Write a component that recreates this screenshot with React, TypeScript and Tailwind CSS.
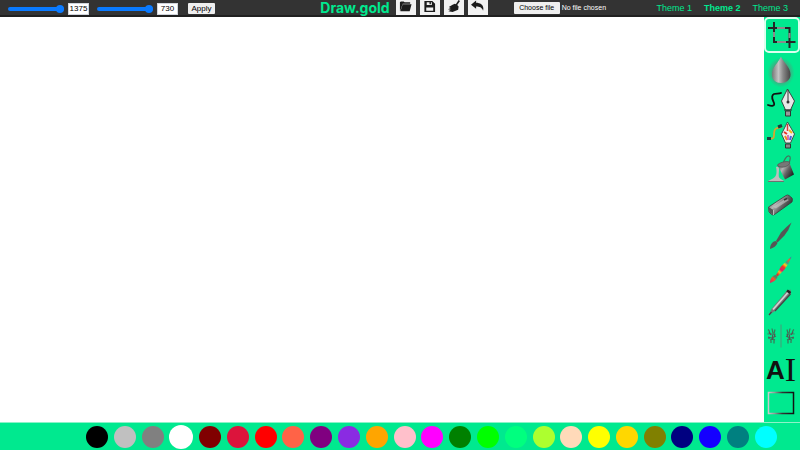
import { useState, type ReactNode } from "react";

const palette: { name: string; className: string }[] = [
  { name: "Black", className: "bg-[#000000]" },
  { name: "Silver", className: "bg-[#c0c0c0]" },
  { name: "Gray", className: "bg-[#808080]" },
  { name: "White", className: "bg-[#ffffff]" },
  { name: "Maroon", className: "bg-[#800000]" },
  { name: "Crimson", className: "bg-[#dc143c]" },
  { name: "Red", className: "bg-[#ff0000]" },
  { name: "Tomato", className: "bg-[#ff6347]" },
  { name: "Purple", className: "bg-[#800080]" },
  { name: "Blue violet", className: "bg-[#8a2be2]" },
  { name: "Orange", className: "bg-[#ffa500]" },
  { name: "Pink", className: "bg-[#ffc0cb]" },
  { name: "Fuchsia", className: "bg-[#ff00ff]" },
  { name: "Green", className: "bg-[#008000]" },
  { name: "Lime", className: "bg-[#00ff00]" },
  { name: "Spring green", className: "bg-[#00ff7f]" },
  { name: "Green yellow", className: "bg-[#adff2f]" },
  { name: "Peach", className: "bg-[#ffdab9]" },
  { name: "Yellow", className: "bg-[#ffff00]" },
  { name: "Gold", className: "bg-[#ffd700]" },
  { name: "Olive", className: "bg-[#808000]" },
  { name: "Navy", className: "bg-[#000080]" },
  { name: "Blue", className: "bg-[#1400ff]" },
  { name: "Teal", className: "bg-[#008080]" },
  { name: "Cyan", className: "bg-[#00ffff]" },
];

function Art({ children }: { children: ReactNode }) {
  return (
    <svg viewBox="0 0 36 34" className="h-[34px] w-9 shrink-0" fill="none" aria-hidden="true">
      {children}
    </svg>
  );
}

function Gradients() {
  return (
    <svg className="sr-only" aria-hidden="true">
      <defs>
        <linearGradient id="steel" x1="0" y1="0" x2="1" y2="0.6">
          <stop offset="0" stopColor="#333" />
          <stop offset="0.4" stopColor="#b5b5b5" />
          <stop offset="0.65" stopColor="#666" />
          <stop offset="1" stopColor="#222" />
        </linearGradient>
        <linearGradient id="metal" x1="0" y1="0" x2="1" y2="0">
          <stop offset="0" stopColor="#777" />
          <stop offset="0.35" stopColor="#c4c4c4" />
          <stop offset="0.6" stopColor="#888" />
          <stop offset="1" stopColor="#444" />
        </linearGradient>
        <linearGradient id="frame" gradientUnits="userSpaceOnUse" x1="4" y1="0" x2="30" y2="0">
          <stop offset="0" stopColor="#d0d0d0" />
          <stop offset="0.25" stopColor="#999" />
          <stop offset="0.55" stopColor="#333" />
          <stop offset="1" stopColor="#111" />
        </linearGradient>
        <linearGradient id="paint" gradientUnits="userSpaceOnUse" x1="6" y1="29" x2="27" y2="4">
          <stop offset="0" stopColor="#e01f6b" />
          <stop offset="0.15" stopColor="#ef5a24" />
          <stop offset="0.22" stopColor="#3c8f6a" />
          <stop offset="0.32" stopColor="#e6262d" />
          <stop offset="0.42" stopColor="#f2c21a" />
          <stop offset="0.5" stopColor="#d81f6d" />
          <stop offset="0.62" stopColor="#ef3a24" />
          <stop offset="0.7" stopColor="#f6d01f" />
          <stop offset="0.78" stopColor="#36a58c" />
          <stop offset="0.9" stopColor="#e8662a" />
          <stop offset="1" stopColor="#3557c8" />
        </linearGradient>
        <radialGradient id="halo">
          <stop offset="0.4" stopColor="#777" stopOpacity="0.9" />
          <stop offset="1" stopColor="#777" stopOpacity="0" />
        </radialGradient>
      </defs>
    </svg>
  );
}

function CropArt() {
  return (
    <Art>
      <g strokeWidth="2">
        <path d="M10 4v20M4 10h22M25.500 9v21M9 24h22.500" stroke="#262626" />
        <path d="M13 10h8M10 14v5M25.500 15v5M13 24h9" stroke="#8b8b8b" />
      </g>
    </Art>
  );
}

function DropArt() {
  return (
    <Art>
      <ellipse cx="17" cy="19.500" rx="13.500" ry="15" fill="url(#halo)" />
      <path d="M17 3.500C15 9 8 14 8 21.500C8 27 12 30 17 30S26.500 27 26.500 21.500C26.500 14 19 9 17 3.500Z" fill="url(#metal)" />
    </Art>
  );
}

function PenArt() {
  return (
    <Art>
      <path d="M4 19c4 1.500 7 1 6-2s-4-7 0-9c2-.8 5 0 7-1" stroke="#111" strokeWidth="1.800" strokeLinecap="round" />
      <path d="M23.500 3L17.500 15l4 9h5l4-9z" fill="#e8e8e8" stroke="#333" strokeWidth="0.900" />
      <path d="M24 4v12" stroke="#333" />
      <circle cx="24" cy="16" r="1.500" fill="#333" />
      <path d="M20 24h8M21.500 25h5v5h-5z" stroke="#333" fill="#999" />
    </Art>
  );
}

function ColorPenArt() {
  return (
    <Art>
      <path d="M4 19.500c4 .5 6 .5 6-3s0-6 2-7 4-.5 6-2" stroke="#d9a52e" strokeWidth="1.800" />
      <path d="M3 19.500h4M14 8l4-1.500" stroke="#1d3d3d" strokeWidth="3" />
      <path d="M23.500 3L17.500 15l4 9h5l4-9z" fill="#eee" stroke="#385347" />
      <path d="M23.500 5v7" stroke="#d93a3a" strokeWidth="1.500" />
      <path d="M20 13l3 2" stroke="#e6332a" strokeWidth="2" />
      <path d="M25 11l3 3" stroke="#f4b41a" strokeWidth="2" />
      <path d="M21 17l2 4" stroke="#f08a1c" strokeWidth="2" />
      <path d="M27 17l-1 4" stroke="#4b62d8" strokeWidth="2" />
      <path d="M24 16v5" stroke="#d34aa4" strokeWidth="1.500" />
      <path d="M21.500 25h5v4h-5z" stroke="#333" fill="#888" />
    </Art>
  );
}

function BucketArt() {
  return (
    <Art>
      <path d="M19 11.500c.5-4 3.500-9 6-8.500s.5 5 0 8" stroke="#46705c" strokeWidth="1.200" />
      <path d="M13.500 12L25 9l5 12.500-9 5z" fill="url(#steel)" />
      <path d="M13.500 12c1-2 9-4.500 11.500-3s-2 4.500-5 5-6.500-.5-6.500-2z" fill="#777" stroke="#555" strokeWidth="0.800" />
      <path d="M12 14c2-.5 3 0 3 2 0 4-1 8 1 9.500l4 2.500v.8H4V28l5-2.500c4-2 4-7 3-11.500z" fill="#bdbdbd" />
      <path d="M4 28.500h16" stroke="#707070" />
    </Art>
  );
}

function EraserArt() {
  return (
    <Art>
      <path d="M4.500 21L22 9.500q1.500-1 3 0l3 2.500q1 1 0 4L10.500 28.500q-1.500 1-3 0L5 26z" fill="url(#steel)" stroke="#3b3b3b" strokeWidth="0.800" />
      <path d="M4.500 21l5 3v5L5.500 26.500z" fill="#555" />
      <path d="M9 21L22 12.500l3 1.500L12 22.500z" fill="#c9c9c9" fillOpacity="0.600" />
      <path d="M20 14l3-1.500" stroke="#333" strokeWidth="1.500" />
      <path d="M9.500 24v5" stroke="#d0d0d0" strokeWidth="0.800" />
    </Art>
  );
}

function BrushArt({ fill }: { fill: string }) {
  return (
    <Art>
      <path d="M6 30c0-5 3-8 6-8l1.500 2c-1 3-4 5-7.500 6z" fill={fill} />
      <path d="M12 22L17 13.500Q22 8 27.500 3.500 25 11 20.500 16.500L13.500 23.500z" fill={fill} />
    </Art>
  );
}

function PencilArt() {
  return (
    <Art>
      <path d="M5 29l2.500-6L23 4.500l3.500-1 .5 4L11 25z" fill="#777" />
      <path d="M9 23.500L24 6.500" stroke="#d2d2d2" strokeWidth="1.800" />
      <path d="M11 25L26.500 8M5 29l2.500-3" stroke="#444" strokeWidth="1.200" />
      <path d="M23 4.500l3.500 2.500" stroke="#222" strokeWidth="2.500" />
    </Art>
  );
}

function Hand() {
  return (
    <>
      <path d="M4 9.500c2 1 1 3 2 4M8 8.500l1 5M11 9.500l-1 4M3.500 14c3-1 5 1 8 0M4 17l4 1 4-2M6 20l3-1 2 1M7 23v-3M10 23.500v-4" stroke="#3d7558" strokeWidth="1.200" />
      <path d="M5 12l2 3M8.500 15v5M10.500 14v3M5 17v2" stroke="#555" strokeWidth="1.200" />
    </>
  );
}

function MirrorArt() {
  return (
    <Art>
      <Hand />
      <path d="M17 4.500v23" stroke="#4a9a78" />
      <g transform="matrix(-1 0 0 1 34 0)">
        <Hand />
      </g>
    </Art>
  );
}

function TextArt() {
  return (
    <span className="flex items-center pr-0.5 leading-none text-[#111]">
      <span className="font-['Liberation_Sans',Arial,sans-serif] text-[26px] font-bold">A</span>
      <span className="font-['Liberation_Serif',serif] text-[34px]">I</span>
    </span>
  );
}

function RectangleArt() {
  return (
    <Art>
      <rect x="4.500" y="6.500" width="25" height="21" stroke="url(#frame)" strokeWidth="1.500" />
    </Art>
  );
}

const tools: { name: string; art: ReactNode }[] = [
  { name: "Crop", art: <CropArt /> },
  { name: "Blur", art: <DropArt /> },
  { name: "Pen", art: <PenArt /> },
  { name: "Color pen", art: <ColorPenArt /> },
  { name: "Fill", art: <BucketArt /> },
  { name: "Eraser", art: <EraserArt /> },
  { name: "Brush", art: <BrushArt fill="#555" /> },
  { name: "Color brush", art: <BrushArt fill="url(#paint)" /> },
  { name: "Pencil", art: <PencilArt /> },
  { name: "Mirror", art: <MirrorArt /> },
  { name: "Text", art: <TextArt /> },
  { name: "Rectangle", art: <RectangleArt /> },
];

const actions: { name: string; art: ReactNode }[] = [
  {
    name: "Open",
    art: <path d="M1 12V2.500l1-1h3l1 1h6V4H4L1.500 11zM4 4.500h9.500L11.500 12h-10z" />,
  },
  {
    name: "Save",
    art: <path fillRule="evenodd" d="M1.500 1h8.500l3 3v9H1.500zM4 2.500v3h5.500v-3H8.500v2H7v-2zM3.500 8v3.500H11V8z" />,
  },
  {
    name: "Clear",
    art: <path d="M12.500 0L14 1 11 5.500l1.500 1.500L12 10.500 6 13 1.500 12l2.500-1.500L1 10l3-1.500L2 7.500 6 5l2.500-1 1 .5z" />,
  },
  {
    name: "Undo",
    art: <path d="M0 5l5.500-4.500V3C10.500 3 14.500 6 13 11.500 12 8 9 7 5.500 7v2.500z" />,
  },
];

function SizeControl({ label, value, onChange }: { label: string; value: number; onChange: (n: number) => void }) {
  return (
    <div className="flex items-center gap-1">
      <input
        type="range"
        aria-label={`${label} slider`}
        min={1}
        max={label === "Width" ? 1375 : 730}
        value={value}
        onChange={(e) => onChange(Number(e.target.value))}
        className="h-2 w-14 appearance-none bg-transparent [&::-webkit-slider-runnable-track]:h-1 [&::-webkit-slider-runnable-track]:rounded-full [&::-webkit-slider-runnable-track]:bg-[#0a7aff] [&::-webkit-slider-thumb]:-mt-0.5 [&::-webkit-slider-thumb]:size-2 [&::-webkit-slider-thumb]:appearance-none [&::-webkit-slider-thumb]:rounded-full [&::-webkit-slider-thumb]:bg-[#0a7aff]"
      />
      <input
        type="text"
        aria-label={label}
        value={value}
        onChange={(e) => onChange(Number(e.target.value) || 0)}
        className="h-3 w-[21px] border border-gray-300 bg-white text-center text-[8px] leading-none text-black"
      />
    </div>
  );
}

export default function App() {
  const [width, setWidth] = useState(1375);
  const [height, setHeight] = useState(730);
  const [theme, setTheme] = useState(2);
  const [tool, setTool] = useState("Crop");
  const [color, setColor] = useState("White");

  return (
    <div className="flex h-screen flex-col overflow-hidden bg-[#00e98f] font-['Liberation_Sans',Arial,sans-serif]">
      <Gradients />
      <header className="grid h-[17px] shrink-0 grid-cols-[1fr_auto_1fr] items-center border-b-2 border-[#202020] bg-[#333] pl-2">
        <div className="flex items-center gap-2 pt-0.5">
          <SizeControl label="Width" value={width} onChange={setWidth} />
          <SizeControl label="Height" value={height} onChange={setHeight} />
          <button type="button" className="ml-0.5 h-[11px] w-[27px] rounded-[1px] bg-[#efefef] text-[8px] leading-none text-black">
            Apply
          </button>
        </div>

        <div className="flex h-full items-center gap-1">
          <h1 className="pr-0.5 font-['Inter',sans-serif] text-[14px] leading-none font-bold text-[#00e98f]">Draw.gold</h1>
          {actions.map((action) => (
            <button
              key={action.name}
              type="button"
              aria-label={action.name}
              className="flex h-[15px] w-5 items-start justify-center bg-[#f2f2f2] text-[#1c1c1c]"
            >
              <svg viewBox="0 0 14 14" className="h-[13px] w-[13px]" fill="currentColor" aria-hidden="true">
                {action.art}
              </svg>
            </button>
          ))}
        </div>

        <div className="flex items-center justify-between pr-3 pl-[26px]">
          <label className="flex items-center gap-0.5 text-[7px] leading-none text-white">
            <input type="file" className="sr-only" />
            <span className="flex h-3 w-[46px] items-center justify-center rounded-[1px] bg-[#efefef] text-black">
              Choose file
            </span>
            <span>No file chosen</span>
          </label>
          <nav className="flex gap-3 pt-0.5 text-[#00e98f]" aria-label="Themes">
            {[1, 2, 3].map((n) => (
              <button
                key={n}
                type="button"
                onClick={() => setTheme(n)}
                className={`text-[9px] leading-none whitespace-nowrap ${theme === n ? "font-bold" : ""}`}
              >
                Theme {n}
              </button>
            ))}
          </nav>
        </div>
      </header>

      <div className="flex min-h-0 flex-1">
        <main className="flex-1 bg-white">
          <canvas className="block h-full w-full" aria-label="Drawing canvas" />
        </main>
        <aside className="flex w-9 shrink-0 flex-col pb-0.5" aria-label="Tools">
          {tools.map(({ name, art }) => (
            <button
              key={name}
              type="button"
              aria-label={name}
              onClick={() => setTool(name)}
              className={
                tool === name
                  ? "flex h-9 shrink-0 items-center justify-center rounded-[5px] border-2 border-[#dcffef]"
                  : "flex min-h-0 flex-1 items-center justify-center"
              }
            >
              {art}
            </button>
          ))}
        </aside>
      </div>

      <footer className="flex h-7 shrink-0 items-center justify-between border-t border-[#8df2c8] pr-[23px] pl-[86px]">
        {palette.map((swatch) => (
          <button
            key={swatch.name}
            type="button"
            aria-label={swatch.name}
            onClick={() => setColor(swatch.name)}
            className={`${swatch.className} rounded-full ${color === swatch.name ? "size-6" : "size-[22px]"}`}
          />
        ))}
      </footer>
    </div>
  );
}
